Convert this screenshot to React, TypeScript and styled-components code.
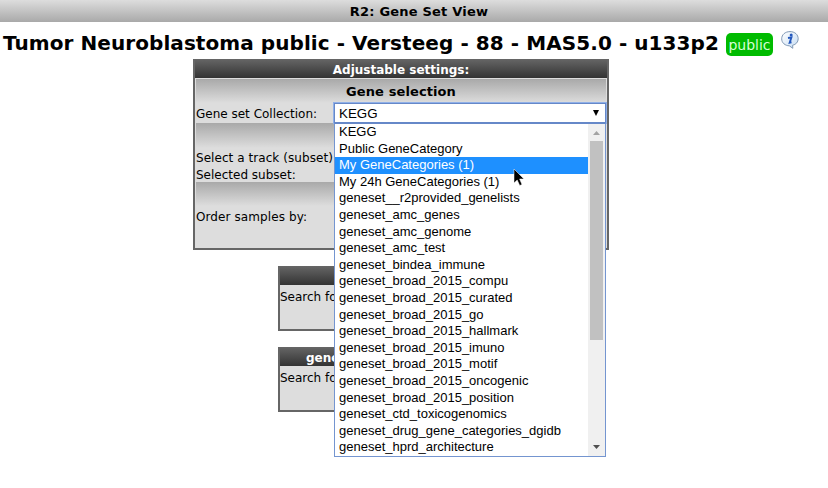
import React from 'react';
import styled, { createGlobalStyle } from 'styled-components';

const Global = createGlobalStyle`
  * { box-sizing: border-box; }
  body { margin: 0; background: #fff; color: #000; font-family: "DejaVu Sans", Verdana, sans-serif; font-size: 12px; overflow: hidden; }
`;

const Page = styled.div`
  width: 828px;
  height: 488px;
  overflow: hidden;
  display: flex;
  flex-direction: column;
`;

const TopBar = styled.header`
  height: 22px;
  padding-left: 10px;
  background: linear-gradient(#dddddd, #a9a9a9);
  font-size: 13px;
  font-weight: bold;
  letter-spacing: 0.2px;
  line-height: 23px;
  text-align: center;
`;

const TitleRow = styled.div`
  height: 37px;
  padding-left: 3px;
  display: flex;
  align-items: flex-start;
`;

const Title = styled.h1`
  margin: 0;
  width: 723px;
  font-size: 20px;
  letter-spacing: 0.07px;
  line-height: 24px;
  padding-top: 9px;
  white-space: nowrap;
`;

const Badge = styled.span`
  width: 47px;
  height: 23px;
  margin-top: 11px;
  border-radius: 5px;
  background: #00bb00;
  color: #d4ffd4;
  font-size: 14px;
  line-height: 24px;
  text-align: center;
`;

const InfoIcon = styled.svg`
  width: 20px;
  height: 20px;
  margin: 8px 0 0 7px;
`;

const Panel = styled.section<{ $width: number; $height: number; $left: number; $gap: number }>`
  width: ${p => p.$width}px;
  height: ${p => p.$height}px;
  margin-left: ${p => p.$left}px;
  margin-bottom: ${p => p.$gap}px;
  flex: none;
  border: 2px solid #666;
  border-top: 0;
  background: #dddddd;
`;

const PanelHeader = styled.h2<{ $indent?: number }>`
  height: 19px;
  margin: 0;
  padding-left: ${p => p.$indent ?? 0}px;
  background: linear-gradient(#666666, #333333);
  color: #fff;
  font-size: 12px;
  line-height: 22px;
  text-align: ${p => (p.$indent ? 'left' : 'center')};
  white-space: nowrap;
`;

const PanelBody = styled.div`
  padding: 1px 1px 0;
  box-shadow: inset 0 0 0 1px #dddddd;
`;

const Heading = styled.h3`
  height: 24px;
  margin: 0;
  background: linear-gradient(#a9a9a9, #dddddd);
  font-size: 13px;
  letter-spacing: 0.1px;
  line-height: 25px;
  text-align: center;
`;

const Band = styled.div<{ $height: number }>`
  height: ${p => p.$height}px;
  background: linear-gradient(#a9a9a9, #dddddd);
`;

const Row = styled.div<{ $height?: number }>`
  height: ${p => p.$height ?? 17}px;
  display: flex;
  align-items: center;
  white-space: nowrap;
`;

const Label = styled.label<{ $spacing?: number; $drop?: number }>`
  width: 138px;
  flex: none;
  padding-top: ${p => p.$drop ?? 2}px;
  letter-spacing: ${p => p.$spacing ?? 0}px;
`;

const Select = styled.div`
  position: relative;
  width: 272px;
  height: 20px;
  flex: none;
  display: flex;
  align-items: center;
  justify-content: space-between;
  padding: 0 5px 0 4px;
  border: 1px solid #6688c8;
  box-shadow: 0 0 0 1px #90b0e8;
  background: #fff;
  font: 13.333px "Liberation Sans", Arial, sans-serif;
`;

const Popup = styled.div`
  position: absolute;
  z-index: 2;
  left: -1px;
  top: 19px;
  width: 272px;
  height: 334px;
  display: flex;
  border: 1px solid #7495d0;
  border-top-color: #6688c8;
  background: #fff;
  font-size: 13px;
`;

const Options = styled.ul`
  width: 253px;
  margin: 0;
  padding: 0;
  list-style: none;
`;

const Option = styled.li<{ $active: boolean }>`
  height: 16.6px;
  padding-left: 4px;
  line-height: 15.6px;
  background: ${p => (p.$active ? '#1e90ff' : 'transparent')};
  color: ${p => (p.$active ? '#fff' : '#000')};
  white-space: nowrap;
`;

const ScrollTrack = styled.div`
  width: 17px;
  display: flex;
  flex-direction: column;
  align-items: center;
  background: #f0f0f0;
`;

const ScrollArrow = styled.svg`
  width: 15px;
  height: 17px;
  flex: none;
`;

const ScrollThumb = styled.div`
  width: 13px;
  height: 199px;
  margin-bottom: auto;
  background: #c1c1c1;
`;

const Cursor = styled.svg`
  position: absolute;
  z-index: 3;
  left: 178px;
  top: 64px;
  width: 14px;
  height: 20px;
`;

const SearchLine = styled.div`
  padding: 4px 0 0;
  line-height: 17px;
`;

const options = [
  'KEGG',
  'Public GeneCategory',
  'My GeneCategories (1)',
  'My 24h GeneCategories (1)',
  'geneset__r2provided_genelists',
  'geneset_amc_genes',
  'geneset_amc_genome',
  'geneset_amc_test',
  'geneset_bindea_immune',
  'geneset_broad_2015_compu',
  'geneset_broad_2015_curated',
  'geneset_broad_2015_go',
  'geneset_broad_2015_hallmark',
  'geneset_broad_2015_imuno',
  'geneset_broad_2015_motif',
  'geneset_broad_2015_oncogenic',
  'geneset_broad_2015_position',
  'geneset_ctd_toxicogenomics',
  'geneset_drug_gene_categories_dgidb',
  'geneset_hprd_architecture',
];

function CollectionSelect() {
  return (
    <Select>
      <span>KEGG</span>
      <svg width="8" height="8" viewBox="0 0 8 8"><path d="M1 1H7L4 7Z" /></svg>
      <Popup>
        <Options>
          {options.map(name => <Option key={name} $active={name === 'My GeneCategories (1)'}>{name}</Option>)}
        </Options>
        <ScrollTrack>
          <ScrollArrow viewBox="0 0 15 17"><path d="M4 11H11L7.5 7Z" fill="#a3a3a3" /></ScrollArrow>
          <ScrollThumb />
          <ScrollArrow viewBox="0 0 15 17"><path d="M4 6H11L7.5 10Z" fill="#505050" /></ScrollArrow>
        </ScrollTrack>
      </Popup>
      <Cursor viewBox="0 0 14 20">
        <path d="M1 1V15L4.2 12L6.7 17.5L9 16.5L6.6 11H11Z" stroke="#fff" strokeWidth="0.5" />
      </Cursor>
    </Select>
  );
}

export default function App() {
  return (
    <>
      <Global />
      <Page>
        <TopBar>R2: Gene Set View</TopBar>
        <TitleRow>
          <Title>Tumor Neuroblastoma public - Versteeg - 88 - MAS5.0 - u133p2</Title>
          <Badge>public</Badge>
          <InfoIcon viewBox="0 0 20 20">
            <defs>
              <linearGradient id="bubble" x1="0" y1="0" x2="1" y2="1">
                <stop offset="0" stopColor="#fff" />
                <stop offset="1" stopColor="#c5dcf3" />
              </linearGradient>
            </defs>
            <path d="M10 1.6C5 1.6 1.7 4.8 1.7 8.8C1.7 13 5.2 15.7 9.3 15.8L12.8 18.3L12.6 15.3C16 14.5 18.2 12 18.2 8.8C18.2 4.8 15 1.6 10 1.6Z" fill="url(#bubble)" stroke="#8199b5" />
            <circle cx="11.2" cy="5" r="1.5" fill="#2458bd" />
            <path d="M8 8L11.4 7.4L9.7 12.6L11.5 12.2" fill="none" stroke="#2458bd" strokeWidth="1.9" />
          </InfoIcon>
        </TitleRow>
        <Panel $width={416} $height={191} $left={193} $gap={16}>
          <PanelHeader>Adjustable settings:</PanelHeader>
          <PanelBody>
            <Heading>Gene selection</Heading>
            <Row $height={20}>
              <Label $drop={1}>Gene set Collection:</Label>
              <CollectionSelect />
            </Row>
            <Band $height={25} />
            <Row><Label $spacing={0.06}>Select a track (subset)</Label></Row>
            <Row><Label>Selected subset:</Label></Row>
            <Band $height={24} />
            <Row $height={22}><Label $spacing={0.1} $drop={0}>Order samples by:</Label></Row>
          </PanelBody>
        </Panel>
        <Panel $width={246} $height={65} $left={278} $gap={16}>
          <PanelHeader />
          <SearchLine>Search fo</SearchLine>
        </Panel>
        <Panel $width={246} $height={65} $left={278} $gap={0}>
          <PanelHeader $indent={26}>gene</PanelHeader>
          <SearchLine>Search fo</SearchLine>
        </Panel>
      </Page>
    </>
  );
}
